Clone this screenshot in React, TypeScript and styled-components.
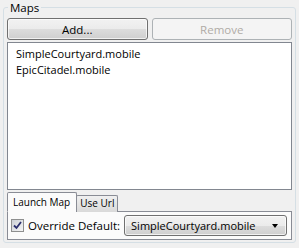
import React from "react";
import styled, { createGlobalStyle, css } from "styled-components";

const GlobalStyle = createGlobalStyle`
    html, body {
        margin: 0;
        padding: 0;
        background-color: #f0f0f0;
    }
    #root {
        height: 248px;
    }
`;

const Page = styled.div`
    box-sizing: border-box;
    height: 248px;
    padding: 0 3px 5px 3px;
    font-family: "Open Sans", "Noto Sans", sans-serif;
    font-size: 11px;
    color: #000;
`;

const GroupBox = styled.fieldset`
    box-sizing: border-box;
    height: 100%;
    margin: 0;
    padding: 3px 3px 2px 3px;
    border: 1px solid #d5dfe5;
    border-radius: 3px;
    display: flex;
    flex-direction: column;
    gap: 2px;
    min-width: 0;
`;

const Legend = styled.legend`
    padding: 0 2px;
    margin-left: 1px;
    font-size: 11.5px;
    line-height: 15px;
    color: #000;
`;

const ButtonRow = styled.div`
    display: grid;
    grid-template-columns: 1fr 1fr;
    gap: 4px;
`;

const Button = styled.button`
    box-sizing: border-box;
    height: 22px;
    padding: 0;
    font: inherit;
    font-size: 11.5px;
    border-radius: 3px;
    border: 1px solid #707070;
    color: #000;
    background: linear-gradient(#f2f2f2 0%, #ebebeb 50%, #dddddd 50%, #cfcfcf 100%);
    box-shadow: inset 0 0 0 1px rgba(255, 255, 255, 0.7);
    ${props => props.disabled &&
        css`
            border-color: #adb2b5;
            color: #b0aba6;
            background: #f4f4f4;
            box-shadow: none;
        `}
`;

const ListBox = styled.div`
    flex: 1;
    box-sizing: border-box;
    background: #fff;
    border: 1px solid #828790;
    padding: 3px 0 0 8px;
`;

const ListItem = styled.div`
    font-size: 11px;
    line-height: 16px;
    white-space: nowrap;
`;

const Tabs = styled.div`
    display: flex;
    flex-direction: column;
`;

const TabStrip = styled.div`
    display: flex;
    align-items: flex-end;
    height: 20px;
    margin-bottom: -1px;
    position: relative;
    z-index: 1;
`;

const Tab = styled.div<{ $active?: boolean }>`
    box-sizing: border-box;
    font-size: 10px;
    border: 1px solid #898c95;
    border-radius: 2px 2px 0 0;
    ${props => props.$active
        ? css`
            height: 20px;
            line-height: 18px;
            background: #fbfbfb;
            border-bottom-color: #fbfbfb;
            padding: 0 6px 0 5px;
        `
        : css`
            height: 17px;
            line-height: 15px;
            margin-left: -1px;
            padding: 0 3px;
            background: linear-gradient(#f0f0f0, #d9d9d9);
            border-bottom: none;
        `}
`;

const TabPanel = styled.div`
    box-sizing: border-box;
    height: 29px;
    border: 1px solid #898c95;
    background: #fbfbfb;
    display: flex;
    align-items: center;
    padding: 0 4px 0 3px;
`;

const CheckBox = styled.span`
    box-sizing: border-box;
    width: 13px;
    height: 13px;
    border: 1px solid #8e8f8f;
    background: linear-gradient(135deg, #cbcfd5, #f6f6f6);
    display: flex;
    align-items: center;
    justify-content: center;
    flex-shrink: 0;
`;

const Label = styled.span`
    font-size: 11.5px;
    margin-left: 4px;
    margin-right: 4px;
    white-space: nowrap;
`;

const ComboBox = styled.div`
    flex: 1;
    box-sizing: border-box;
    height: 21px;
    border: 1px solid #707070;
    border-radius: 3px;
    background: linear-gradient(#f2f2f2 0%, #ebebeb 50%, #dddddd 50%, #cfcfcf 100%);
    box-shadow: inset 0 0 0 1px rgba(255, 255, 255, 0.7);
    display: flex;
    align-items: center;
    justify-content: space-between;
    padding: 0 8px 0 6px;
    font-size: 11px;
    white-space: nowrap;
`;

const Arrow = styled.span`
    width: 0;
    height: 0;
    border-left: 3.5px solid transparent;
    border-right: 3.5px solid transparent;
    border-top: 4px solid #000;
`;

export default function App() {
    const maps = ["SimpleCourtyard.mobile", "EpicCitadel.mobile"];
    return (
        <Page>
            <GlobalStyle />
            <GroupBox>
                <Legend>Maps</Legend>
                <ButtonRow>
                    <Button>Add...</Button>
                    <Button disabled>Remove</Button>
                </ButtonRow>
                <ListBox>
                    {maps.map(m => (
                        <ListItem key={m}>{m}</ListItem>
                    ))}
                </ListBox>
                <Tabs>
                    <TabStrip>
                        <Tab $active>Launch Map</Tab>
                        <Tab>Use Url</Tab>
                    </TabStrip>
                    <TabPanel>
                        <CheckBox>
                            <svg width="9" height="9" viewBox="0 0 9 9">
                                <path d="M1 4.5 L3.5 7 L8 1" fill="none" stroke="#2b2f6e" strokeWidth="1.8" />
                            </svg>
                        </CheckBox>
                        <Label>Override Default:</Label>
                        <ComboBox>
                            <span>SimpleCourtyard.mobile</span>
                            <Arrow />
                        </ComboBox>
                    </TabPanel>
                </Tabs>
            </GroupBox>
        </Page>
    );
}
